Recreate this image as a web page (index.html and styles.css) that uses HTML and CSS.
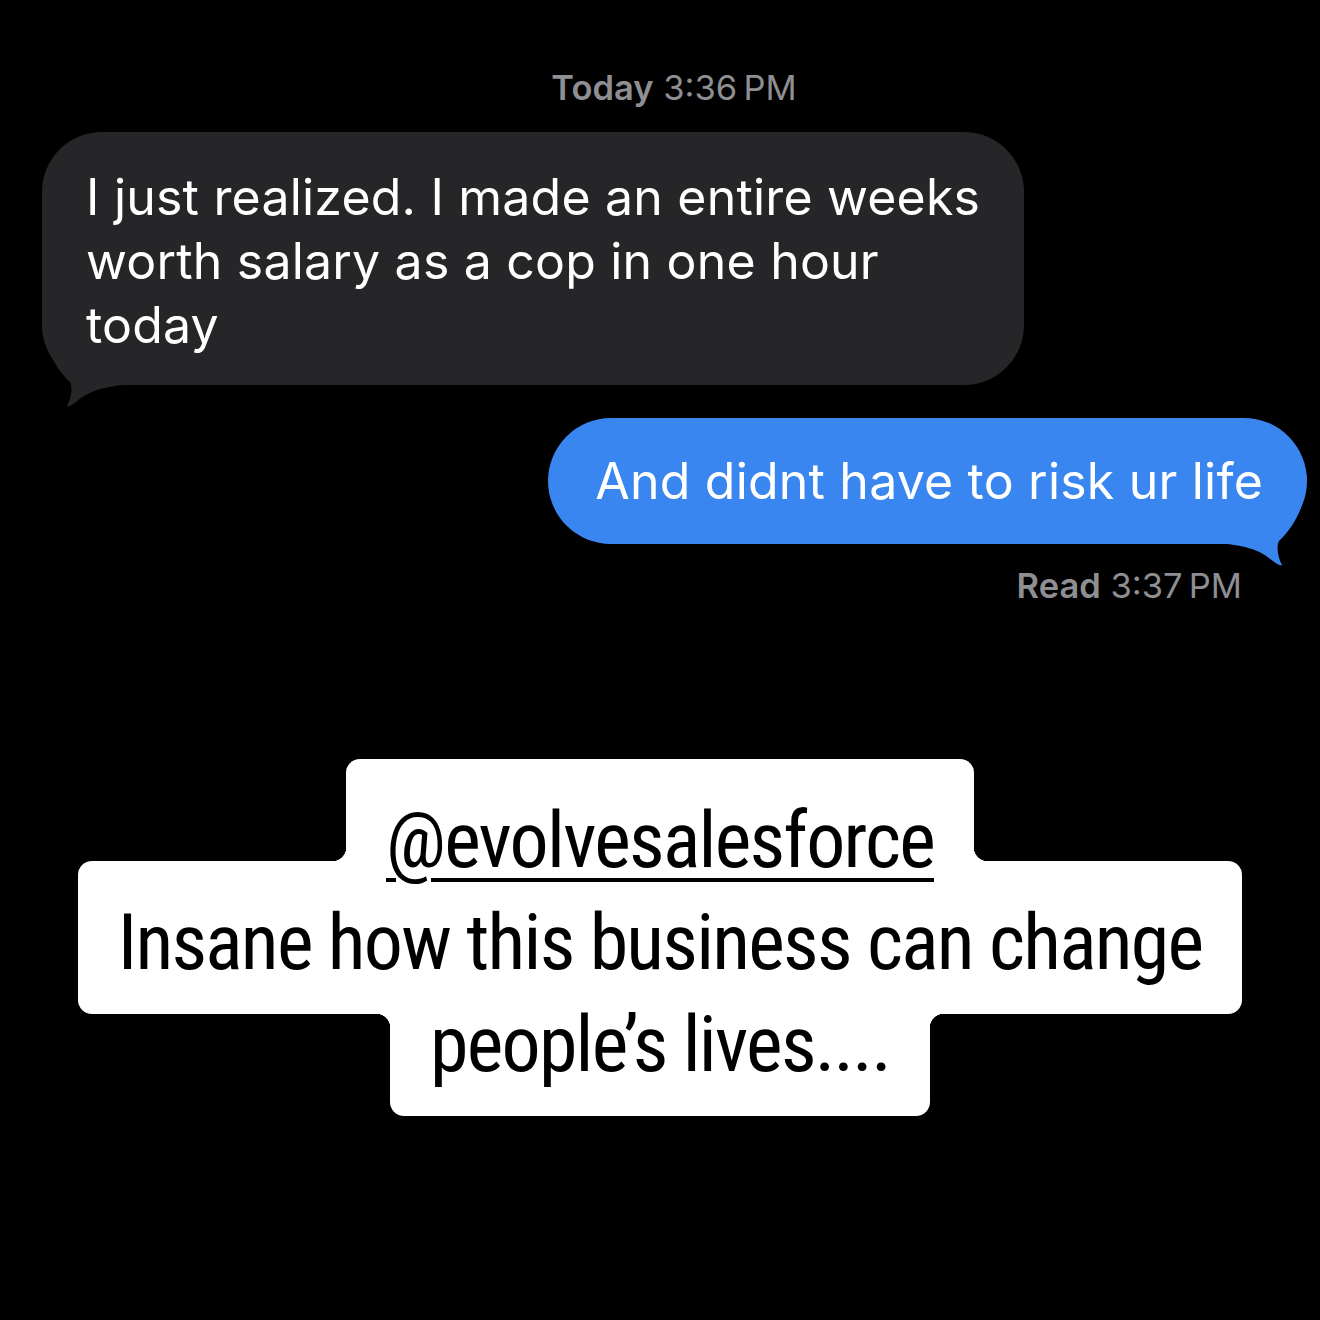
FILE: index.html
```html
<!DOCTYPE html>
<html lang="en">
<head>
<meta charset="utf-8">
<title>Messages</title>
<link rel="stylesheet" href="styles.css">
</head>
<body>
<main class="thread">
  <div class="stamp"><b>Today</b> 3:36&#8239;PM</div>

  <div class="bubble in">I just realized. I made an entire weeks<br>worth salary as a cop in one hour<br>today<svg class="tail" viewBox="0 -85 90 110" width="90" height="110" aria-hidden="true"><path d="M0,-70 C1,-45 8,-22 28,-3 C31,3 29,14 25,21 C27,22 30,20 34,17 C45,8 55,3 80,0 L45,-8 L12,-35 Z"/></svg></div>

  <div class="bubble out">And didnt have to risk ur life<svg class="tail" viewBox="0 -85 90 110" width="90" height="110" aria-hidden="true"><path d="M0,-70 C1,-45 8,-22 28,-3 C31,3 29,14 25,21 C27,22 30,20 34,17 C45,8 55,3 80,0 L45,-8 L12,-35 Z"/></svg></div>

  <div class="receipt"><b>Read</b> 3:37&#8239;PM</div>

  <div class="caption">
    <div class="cap-line cap-top"><span class="handle">@evolvesalesforce</span></div>
    <div class="cap-line cap-mid"><span>Insane how this business can change</span></div>
    <div class="cap-line cap-bottom"><span>people’s lives....</span></div>
  </div>
</main>
</body>
</html>
```

FILE: styles.css
```css
html, body {
  margin: 0;
  background: #000;
}

body {
  font-family: Inter, "Liberation Sans", sans-serif;
  -webkit-font-smoothing: antialiased;
}

.thread {
  display: flex;
  flex-direction: column;
  padding-top: 67px;
  min-height: 1320px;
  box-sizing: border-box;
}

.stamp {
  align-self: center;
  padding-left: 28px;
  color: #8e8e93;
  font-size: 34.5px;
  line-height: 42px;
}

.stamp b,
.receipt b {
  font-weight: 600;
}

.bubble {
  position: relative;
  box-sizing: border-box;
  color: #fff;
  font-size: 50px;
  line-height: 64px;
  letter-spacing: 0.2px;
  white-space: nowrap;
}

.bubble .tail {
  position: absolute;
  bottom: -25px;
  left: 0;
}

.bubble.in {
  align-self: flex-start;
  width: 982px;
  margin: 23px 0 0 42px;
  padding: 33px 44px 28px;
  background: #262629;
  border-radius: 60px;
}

.bubble.in .tail {
  fill: #262629;
}

.bubble.out {
  align-self: flex-end;
  margin: 33px 13px 0 0;
  padding: 31px 44px 31px 47px;
  background: #3a86f0;
  border-radius: 63px;
}

.bubble.out .tail {
  left: auto;
  right: 0;
  fill: #3a86f0;
  transform: scaleX(-1);
}

.receipt {
  align-self: flex-end;
  margin: 21px 78px 0 0;
  color: #8e8e93;
  font-size: 34.5px;
  line-height: 42px;
}

.caption {
  margin-top: 152px;
  display: flex;
  flex-direction: column;
  align-items: center;
  font-family: "Roboto Condensed", Roboto, sans-serif;
  font-stretch: 75%;
  font-size: 78px;
  letter-spacing: -1.75px;
  color: #000;
}

.cap-line {
  position: relative;
  background: #fff;
  border-radius: 14px;
  padding: 10px 40px 0;
  line-height: 143px;
  white-space: nowrap;
}

.cap-line > span {
  position: relative;
  z-index: 1;
}

.cap-line + .cap-line {
  margin-top: -51px;
}

.handle {
  text-decoration: underline;
  text-decoration-thickness: 4px;
  text-underline-offset: 11px;
}

.cap-top::before,
.cap-top::after,
.cap-bottom::before,
.cap-bottom::after {
  content: "";
  position: absolute;
  width: 14px;
  height: 14px;
}

.cap-top::before,
.cap-top::after {
  top: 88px;
}

.cap-top::before {
  left: -14px;
  background: radial-gradient(circle at 0 0, transparent 14px, #fff 14.5px);
}

.cap-top::after {
  right: -14px;
  background: radial-gradient(circle at 100% 0, transparent 14px, #fff 14.5px);
}

.cap-bottom::before,
.cap-bottom::after {
  top: 51px;
}

.cap-bottom::before {
  left: -14px;
  background: radial-gradient(circle at 0 100%, transparent 14px, #fff 14.5px);
}

.cap-bottom::after {
  right: -14px;
  background: radial-gradient(circle at 100% 100%, transparent 14px, #fff 14.5px);
}
```
